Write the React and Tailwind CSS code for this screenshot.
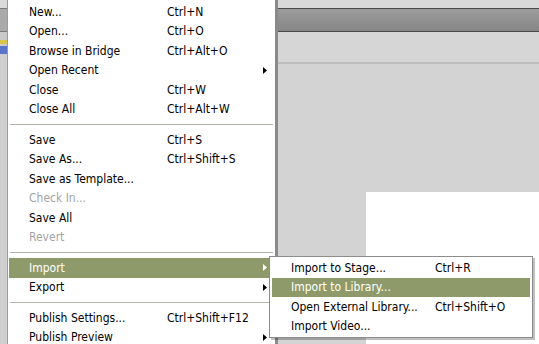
import React from "react";

const groups = [
  [
    { label: "New...", key: "Ctrl+N" },
    { label: "Open...", key: "Ctrl+O" },
    { label: "Browse in Bridge", key: "Ctrl+Alt+O" },
    { label: "Open Recent", sub: true },
    { label: "Close", key: "Ctrl+W" },
    { label: "Close All", key: "Ctrl+Alt+W" },
  ],
  [
    { label: "Save", key: "Ctrl+S" },
    { label: "Save As...", key: "Ctrl+Shift+S" },
    { label: "Save as Template..." },
    { label: "Check In...", disabled: true },
    { label: "Save All" },
    { label: "Revert", disabled: true },
  ],
  [
    { label: "Import", sub: true, active: true },
    { label: "Export", sub: true },
  ],
  [
    { label: "Publish Settings...", key: "Ctrl+Shift+F12" },
    { label: "Publish Preview", sub: true },
  ],
];

const importItems = [
  { label: "Import to Stage...", key: "Ctrl+R" },
  { label: "Import to Library...", active: true },
  { label: "Open External Library...", key: "Ctrl+Shift+O" },
  { label: "Import Video..." },
];

function Arrow({ white }) {
  return (
    <svg width="4" height="7" viewBox="0 0 4 7" className="absolute right-[7px] top-[6px]">
      <path d="M0 0 L4 3.5 L0 7 Z" fill={white ? "#ffffff" : "#000000"} />
    </svg>
  );
}

function MenuRow({ item }) {
  const text = item.disabled
    ? "text-[#a3a3a3]"
    : item.active
    ? "text-white"
    : "text-black";
  return (
    <div
      className={`relative flex h-[19.5px] items-center ${
        item.active ? "bg-[#8f9a6b]" : ""
      } ${text}`}
    >
      <span className="w-[158px] pl-[20px]">{item.label}</span>
      <span>{item.key}</span>
      {item.sub && <Arrow white={item.active} />}
    </div>
  );
}

function Separator() {
  return (
    <div className="flex h-[11px] items-center px-[2px]">
      <div className="h-[2px] w-full border-t border-[#b4b4ac] border-b-white" />
    </div>
  );
}

export default function App() {
  return (
    <div
      className="relative h-[344px] w-[539px] overflow-hidden bg-[#d3d3d3] text-[12px] leading-none"
      style={{ fontFamily: "Tahoma, 'DejaVu Sans Condensed', 'Liberation Sans', sans-serif" }}
    >
      <div className="flex h-full">
        {/* app strip on the left */}
        <div className="flex w-[7px] flex-col bg-[#c9c9c9]">
          <div className="h-[8px] bg-[#dadada]" />
          <div className="h-[24px] border-y border-[#777] bg-[#a9a9a9]" />
          <div className="mt-[8px] h-[4px] bg-[#d8c64a]" />
          <div className="mt-[2px] h-[8px] bg-[#5a74c8]" />
          <div className="flex-1 bg-[#cfcfcf]" />
        </div>

        {/* main file menu */}
        <div className="h-full w-[271px] border-l border-r-[3px] border-l-[#9a9a9a] border-r-[#8a8a8a] bg-white pt-[2px]">
          {groups.map((g, i) => (
            <div key={i}>
              {i > 0 && <Separator />}
              <div className="px-[1px]">
                {g.map((item) => (
                  <MenuRow key={item.label} item={item} />
                ))}
              </div>
            </div>
          ))}
        </div>

        {/* stage area */}
        <div className="flex flex-1 flex-col">
          <div className="h-[8px] bg-[#d9d9d9]" />
          <div className="h-[24px] border-y border-[#4a4a4a] bg-gradient-to-b from-[#9c9c9c] to-[#868686]" />
          <div className="h-[32px] border-b-2 border-[#bdbdbd] bg-[#d6d6d6]" />
          <div className="flex flex-1 flex-col bg-[#d3d3d3]">
            <div className="h-[128px]" />
            <div className="ml-[88px] flex-1 bg-white" />
          </div>
        </div>
      </div>

      {/* import submenu */}
      <div className="absolute left-[269px] top-[256px] w-[264px] border border-[#8c8c8c] bg-white px-[2px] py-[1px] shadow-[2px_2px_0_rgba(0,0,0,0.25)]">
        {importItems.map((item) => (
          <div
            key={item.label}
            className={`flex h-[19.5px] items-center ${
              item.active ? "bg-[#8f9a6b] text-white" : "text-black"
            }`}
          >
            <span className="w-[163px] pl-[19px]">{item.label}</span>
            <span>{item.key}</span>
          </div>
        ))}
      </div>
    </div>
  );
}
